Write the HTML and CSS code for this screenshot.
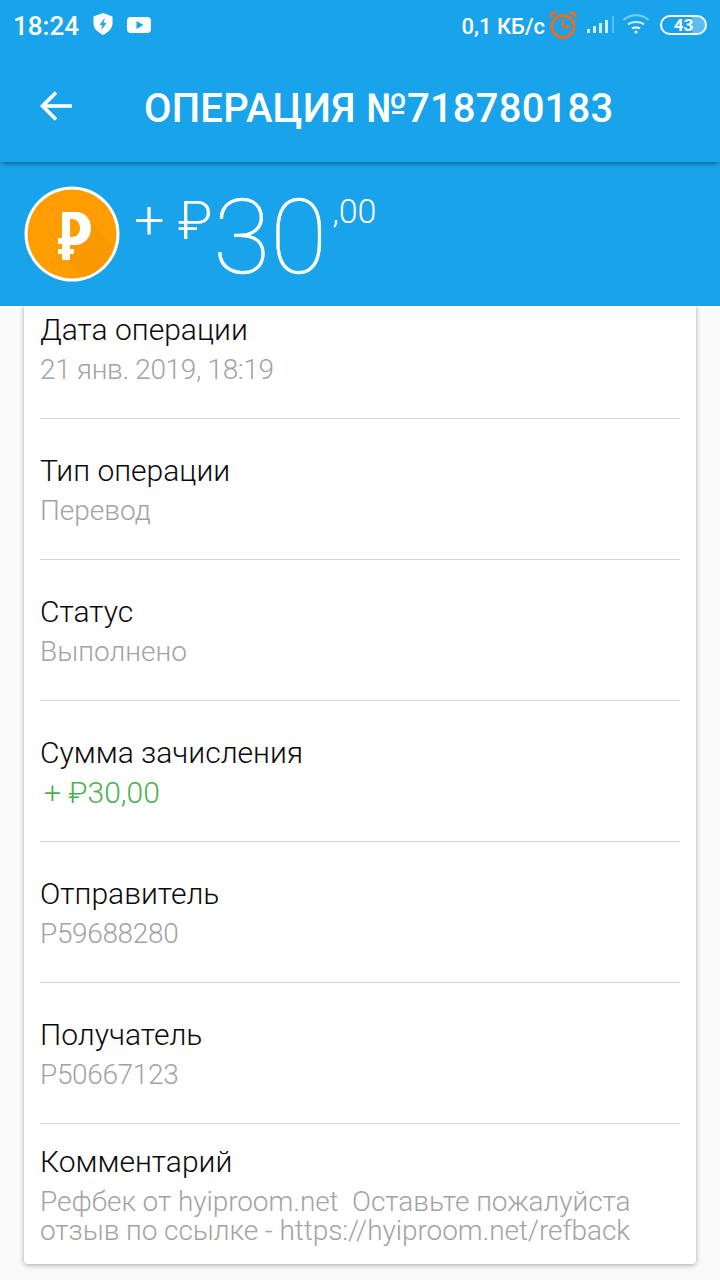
FILE: index.html
```html
<!DOCTYPE html>
<html lang="ru">
<head>
  <meta charset="UTF-8">
  <meta name="viewport" content="width=device-width, initial-scale=1.0">
  <title>Операция №718780183</title>
  <link rel="stylesheet" href="styles.css">
</head>
<body>

  <div class="status">
    <span class="time">18:24</span>
    <svg class="ico-shield" width="20" height="22" viewBox="0 0 20 22">
      <path d="M10 0 L19.500 3.500 V10.500 C19.500 15.500 15 19.500 10 22 C5 19.500 0.500 15.500 0.500 10.500 V3.500 Z" fill="#fff"/>
      <path d="M12 4.500 L6.500 12 H9.500 L8 17.500 L13.500 10 H10.500 Z" fill="#18a3ea"/>
    </svg>
    <svg class="ico-yt" width="24" height="16" viewBox="0 0 24 16">
      <rect x="0" y="0" width="24" height="16" rx="4" fill="#fff"/>
      <path d="M9.500 4 L16.500 8 L9.500 12 Z" fill="#18a3ea"/>
    </svg>
    <span class="spacer"></span>
    <span class="speed">0,1 КБ/с</span>
    <svg class="ico-alarm" width="30" height="30" viewBox="0 0 30 30" fill="none" stroke="#f26a1b">
      <circle cx="15" cy="16.500" r="11" stroke-width="2.800"/>
      <path d="M15 10 V17 H22" stroke-width="2.400"/>
      <path d="M2 7 C2 3.500 5 1.500 8 2 Z M28 7 C28 3.500 25 1.500 22 2 Z" fill="#f26a1b" stroke-width="1.500"/>
    </svg>
    <svg class="ico-signal" width="28" height="20" viewBox="0 0 28 20">
      <rect x="0" y="15" width="3" height="4" fill="#fff" opacity=".8"/>
      <rect x="6" y="12" width="3" height="7" fill="#fff" opacity=".8"/>
      <rect x="12" y="9" width="3" height="10" fill="#fff" opacity=".8"/>
      <rect x="18" y="6" width="3" height="13" fill="#fff" opacity=".8"/>
      <rect x="25" y="2" width="2" height="17" fill="#fff" opacity=".3"/>
    </svg>
    <svg class="ico-wifi" width="28" height="20" viewBox="0 0 28 20" fill="none" stroke="#fff" stroke-width="2">
      <path d="M1.500 6 C8 -0.500 20 -0.500 26.500 6" opacity=".45"/>
      <path d="M6 10.500 C10 7 18 7 22 10.500" opacity=".8"/>
      <path d="M10 14.500 C12 13 16 13 18 14.500"/>
      <circle cx="14" cy="18" r="1.500" fill="#fff" stroke="none"/>
    </svg>
    <span class="battery"><span class="battery-level"></span><span class="battery-num">43</span></span>
  </div>

  <header class="toolbar">
    <svg class="back" width="36" height="32" viewBox="0 0 36 32" fill="none" stroke="#fff" stroke-width="3.600">
      <path d="M33 16 H3"/>
      <path d="M17 2.500 L3.500 16 L17 29.500"/>
    </svg>
    <h1>ОПЕРАЦИЯ №718780183</h1>
  </header>

  <section class="balance">
    <svg class="coin" width="96" height="96" viewBox="0 0 96 96">
      <circle cx="48" cy="48" r="47.500" fill="#fff"/>
      <circle cx="48" cy="48" r="44.500" fill="#ff9d00"/>
      <path d="M62 32 L90 60 A44.500 44.500 0 0 1 60 91 L38 70 Z" fill="#fa9800"/>
      <path d="M38 26 H52 C61 26 67 33 67 42 C67 52 60 59 51 59 H46 V63 H50 V68 H46 V74 H38 V68 H34 V63 H38 V58 H34 V52 H38 Z M46 33 V51 H48 C53 51 56 47 56 42 C56 37 53 33 48 33 Z" fill="#fff" fill-rule="evenodd"/>
    </svg>
    <span class="sign">+ ₽</span>
    <span class="whole">30</span>
    <span class="cents">,00</span>
  </section>

  <main class="content">
    <div class="card">
      <div class="row first">
        <div class="label">Дата операции</div>
        <div class="value tight">21 янв. 2019, 18:19</div>
      </div>
      <div class="row">
        <div class="label">Тип операции</div>
        <div class="value">Перевод</div>
      </div>
      <div class="row">
        <div class="label">Статус</div>
        <div class="value">Выполнено</div>
      </div>
      <div class="row">
        <div class="label">Сумма зачисления</div>
        <div class="value green">+ ₽30,00</div>
      </div>
      <div class="row">
        <div class="label">Отправитель</div>
        <div class="value tight">P59688280</div>
      </div>
      <div class="row">
        <div class="label">Получатель</div>
        <div class="value tight">P50667123</div>
      </div>
      <div class="row last">
        <div class="label">Комментарий</div>
        <div class="value multi">Рефбек от hyiproom.net&nbsp; Оставьте пожалуйста<br>отзыв по ссылке - https://hyiproom.net/refback</div>
      </div>
    </div>
  </main>

</body>
</html>
```

FILE: styles.css
```css
html, body { margin: 0; padding: 0; }
body { width: 720px; height: 1280px; overflow: hidden; background: #fafafa; font-family: Roboto, "Noto Sans", sans-serif; color: #0a0a0a; }

.status { height: 54px; background: #18a3ea; color: #fff; display: flex; align-items: center; padding: 0 13px 2px 13px; box-sizing: border-box; }
.time { font-size: 26px; font-weight: 500; margin-right: 14px; }
.ico-shield { margin: -4px 14px 0 0; }
.ico-yt { margin-top: -2px; }
.spacer { flex: 1; }
.speed { font-size: 22px; font-weight: 500; margin-right: 3px; }
.ico-alarm { margin: -3px 9px 0 0; }
.ico-signal { margin: -4px 7px 0 0; }
.ico-wifi { margin: -4px 10px 0 0; }
.battery { position: relative; width: 47px; height: 20px; margin-top: -2px; box-sizing: border-box; border: 2px solid #fff; border-radius: 10px; display: flex; align-items: center; justify-content: center; overflow: hidden; }
.battery-level { position: absolute; right: 0; top: 0; bottom: 0; width: 30%; background: rgba(255, 255, 255, .3); }
.battery-num { position: relative; font-size: 17px; font-weight: 700; }

.toolbar { height: 108px; background: #18a3ea; color: #fff; display: flex; align-items: center; box-shadow: 0 4px 4px -2px rgba(0, 0, 0, .35); position: relative; z-index: 3; }
.back { margin: -4px 69px 0 39px; }
.toolbar h1 { margin: 0; font-size: 40px; font-weight: 500; letter-spacing: .2px; }

.balance { height: 144px; background: #18a3ea; color: #fff; display: flex; align-items: flex-start; font-weight: 300; position: relative; z-index: 2; }
.coin { margin: 24px 14px 0 24px; flex: none; }
.sign { font-size: 54px; line-height: 56px; margin-top: 31px; font-weight: 300; }
.whole { font-size: 104px; line-height: 112px; margin: 20px 0 0 1px; font-weight: 100; -webkit-text-stroke: .5px #fff; }
.cents { font-size: 34px; line-height: 38px; margin: 30px 0 0 5px; font-weight: 300; }

.content { padding: 0 24px; position: relative; z-index: 1; }
.card { background: #fff; border-radius: 0 0 4px 4px; box-shadow: 0 1px 5px rgba(0, 0, 0, .35); padding: 0 16px; height: 958px; box-sizing: border-box; }
.row { height: 141px; box-sizing: border-box; border-bottom: 1px solid #d6d6d6; padding-top: 34px; }
.row.first { height: 113px; padding-top: 6px; }
.row.last { border-bottom: 0; padding-top: 20px; height: 140px; }
.label { font-size: 30px; line-height: 36px; font-weight: 300; }
.value { font-size: 28px; line-height: 36px; margin-top: 4px; font-weight: 300; color: #a3a3a3; }
.value.tight { letter-spacing: -.35px; }
.value.green { font-size: 30px; color: #4caf50; padding-left: 4px; }
.value.multi { line-height: 29px; margin-top: 7px; letter-spacing: -.07px; }
```
